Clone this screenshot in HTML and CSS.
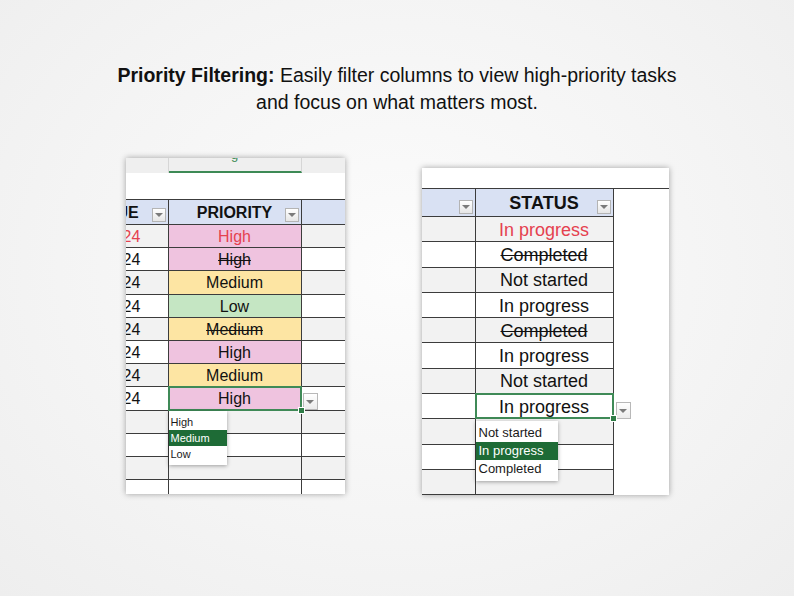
FILE: index.html
```html
<!DOCTYPE html>
<html lang="en">
<head>
    <meta charset="UTF-8">
    <meta name="viewport" content="width=device-width, initial-scale=1.0">
    <title>Priority Filtering</title>
    <link rel="stylesheet" href="styles.css">
</head>
<body>

<p class="title"><b>Priority Filtering:</b> Easily filter columns to view high-priority tasks<br>and focus on what matters most.</p>

<div class="panels">

    <!-- priority column -->
    <div class="sheet priority">
        <div class="letters">
            <span></span>
            <span class="active"><i>g</i></span>
            <span></span>
        </div>
        <div class="blank"></div>

        <div class="row head">
            <div class="cell first"><span class="cut-head">UE</span><span class="filter"></span></div>
            <div class="cell">PRIORITY<span class="filter"></span></div>
            <div class="cell last"></div>
        </div>
        <div class="row alt red">
            <div class="cell first"><span class="cut">24</span></div>
            <div class="cell high">High</div>
            <div class="cell last"></div>
        </div>
        <div class="row">
            <div class="cell first"><span class="cut">24</span></div>
            <div class="cell high done">High</div>
            <div class="cell last"></div>
        </div>
        <div class="row alt">
            <div class="cell first"><span class="cut">24</span></div>
            <div class="cell medium">Medium</div>
            <div class="cell last"></div>
        </div>
        <div class="row">
            <div class="cell first"><span class="cut">24</span></div>
            <div class="cell low">Low</div>
            <div class="cell last"></div>
        </div>
        <div class="row alt">
            <div class="cell first"><span class="cut">24</span></div>
            <div class="cell medium done">Medium</div>
            <div class="cell last"></div>
        </div>
        <div class="row">
            <div class="cell first"><span class="cut">24</span></div>
            <div class="cell high">High</div>
            <div class="cell last"></div>
        </div>
        <div class="row alt">
            <div class="cell first"><span class="cut">24</span></div>
            <div class="cell medium">Medium</div>
            <div class="cell last"></div>
        </div>
        <div class="row">
            <div class="cell first"><span class="cut">24</span></div>
            <div class="cell high selected">High
                <span class="picker"></span>
                <ul class="options">
                    <li>High</li>
                    <li class="on">Medium</li>
                    <li>Low</li>
                </ul>
            </div>
            <div class="cell last"></div>
        </div>
        <div class="row alt"><div class="cell first"></div><div class="cell"></div><div class="cell last"></div></div>
        <div class="row"><div class="cell first"></div><div class="cell"></div><div class="cell last"></div></div>
        <div class="row alt"><div class="cell first"></div><div class="cell"></div><div class="cell last"></div></div>
        <div class="row"><div class="cell first"></div><div class="cell"></div><div class="cell last"></div></div>
    </div>

    <!-- status column -->
    <div class="sheet status">
        <div class="blank"></div>

        <div class="row head">
            <div class="cell first"><span class="filter"></span></div>
            <div class="cell">STATUS<span class="filter"></span></div>
            <div class="cell last"></div>
        </div>
        <div class="row alt red">
            <div class="cell first"></div>
            <div class="cell">In progress</div>
            <div class="cell last"></div>
        </div>
        <div class="row">
            <div class="cell first"></div>
            <div class="cell done">Completed</div>
            <div class="cell last"></div>
        </div>
        <div class="row alt">
            <div class="cell first"></div>
            <div class="cell">Not started</div>
            <div class="cell last"></div>
        </div>
        <div class="row">
            <div class="cell first"></div>
            <div class="cell">In progress</div>
            <div class="cell last"></div>
        </div>
        <div class="row alt">
            <div class="cell first"></div>
            <div class="cell done">Completed</div>
            <div class="cell last"></div>
        </div>
        <div class="row">
            <div class="cell first"></div>
            <div class="cell">In progress</div>
            <div class="cell last"></div>
        </div>
        <div class="row alt">
            <div class="cell first"></div>
            <div class="cell">Not started</div>
            <div class="cell last"></div>
        </div>
        <div class="row">
            <div class="cell first"></div>
            <div class="cell selected">In progress
                <span class="picker"></span>
                <ul class="options">
                    <li>Not started</li>
                    <li class="on">In progress</li>
                    <li>Completed</li>
                </ul>
            </div>
            <div class="cell last"></div>
        </div>
        <div class="row alt"><div class="cell first"></div><div class="cell"></div><div class="cell last"></div></div>
        <div class="row"><div class="cell first"></div><div class="cell"></div><div class="cell last"></div></div>
        <div class="row alt"><div class="cell first"></div><div class="cell"></div><div class="cell last"></div></div>
    </div>

</div>

</body>
</html>
```

FILE: styles.css
```css
body {
    margin: 0;
    height: 596px;
    font-family: 'Liberation Sans', Arial, sans-serif;
    color: #111;
    background: radial-gradient(ellipse at 50% 45%, #fcfcfc 0%, #f4f4f4 60%, #eeeeee 100%);
}

.title {
    margin: 62px 0 0;
    text-align: center;
    font-size: 19.5px;
    line-height: 27px;
}

.panels {
    display: flex;
    justify-content: center;
    align-items: flex-start;
    gap: 77px;
    margin-top: 42px;
}

.sheet {
    position: relative;
    background-color: #ffffff;
    box-shadow: 0 0 6px rgba(0, 0, 0, 0.35);
}

.priority {
    width: 219px;
    height: 336px;
    overflow: hidden;
}

.status {
    width: 247px;
    height: 327px;
    margin-top: 10px;
}

/* column letter strip */
.letters {
    display: grid;
    grid-template-columns: 43px 133px 1fr;
    height: 15px;
    background-color: #efefef;
    overflow: hidden;
}

.letters span {
    border-right: 1px solid #d6d6d6;
}

.letters span:last-child {
    border-right: none;
}

.letters .active {
    border-bottom: 2px solid #3d8a55;
    text-align: center;
}

.letters .active i {
    display: block;
    font-style: normal;
    font-size: 13px;
    line-height: 13px;
    color: #3d8a55;
    margin-top: -10px;
}

.priority .blank {
    height: 26px;
}

.status .blank {
    height: 20px;
}

/* grid rows */
.row {
    display: grid;
}

.priority .row {
    grid-template-columns: 43px 133px 1fr;
    height: 23.2px;
    font-size: 16px;
}

.status .row {
    grid-template-columns: 54px 138px 1fr;
    height: 25.3px;
    font-size: 18px;
}

.cell {
    position: relative;
    display: flex;
    align-items: center;
    justify-content: center;
    padding-top: 2px;
    white-space: nowrap;
    border-right: 1px solid #3c3c3c;
    border-bottom: 1px solid #3c3c3c;
}

.cell.first {
    justify-content: flex-start;
}

.priority .cell.last {
    border-right: none;
}

.status .cell.last {
    border: none;
    background-color: #ffffff !important;
}

.row.alt .cell {
    background-color: #f2f2f2;
}

.row.head .cell {
    background-color: #d9e1f3;
    border-top: 1px solid #3c3c3c;
    font-weight: bold;
}

.priority .row.head {
    height: 26px;
}

.status .row.head {
    height: 29px;
}

.row.red .cell {
    color: #e5414f;
}

.cut {
    margin-left: -3px;
}

.cut-head {
    margin-left: -9px;
}

.done {
    text-decoration: line-through;
}

.row .cell.high {
    background-color: #efc3df;
}

.row .cell.medium {
    background-color: #fde5a3;
}

.row .cell.low {
    background-color: #c5e6c3;
}

/* header filter buttons */
.filter {
    position: absolute;
    right: 2px;
    bottom: 2px;
    width: 12px;
    height: 12px;
    border: 1px solid #b4b4b4;
    background: linear-gradient(#ffffff, #e6e6e6);
}

.filter::after,
.picker::after {
    content: '';
    position: absolute;
    left: 50%;
    top: 50%;
    margin: -2px 0 0 -4px;
    border-left: 4px solid transparent;
    border-right: 4px solid transparent;
    border-top: 4px solid #7b7b7b;
}

/* active cell with its list */
.cell.selected {
    z-index: 3;
}

.cell.selected::before {
    content: '';
    position: absolute;
    left: -1px;
    top: -1px;
    right: -1px;
    bottom: -1px;
    border: 2px solid #3f8a57;
}

.cell.selected::after {
    content: '';
    position: absolute;
    right: -4px;
    bottom: -4px;
    width: 5px;
    height: 5px;
    background-color: #2f7d47;
    border: 1px solid #ffffff;
}

.picker {
    position: absolute;
    width: 13px;
    height: 15px;
    border: 1px solid #b8b8b8;
    background: linear-gradient(#ffffff, #ebebeb);
}

.priority .picker {
    left: 134px;
    top: 6px;
}

.status .picker {
    left: 140px;
    top: 8px;
}

.options {
    position: absolute;
    left: 0;
    margin: 0;
    padding: 3px 0;
    list-style: none;
    background-color: #ffffff;
    box-shadow: 0 1px 4px rgba(0, 0, 0, 0.35);
    color: #1a1a1a;
    font-weight: normal;
}

.options .on {
    background-color: #1e6b36;
    color: #ffffff;
}

.priority .options {
    top: 24px;
    width: 58px;
    font-size: 11px;
}

.priority .options li {
    height: 16px;
    line-height: 16px;
    padding-left: 2px;
}

.status .options {
    top: 27px;
    width: 82px;
    font-size: 13px;
}

.status .options li {
    height: 18px;
    line-height: 18px;
    padding-left: 3px;
}
```
